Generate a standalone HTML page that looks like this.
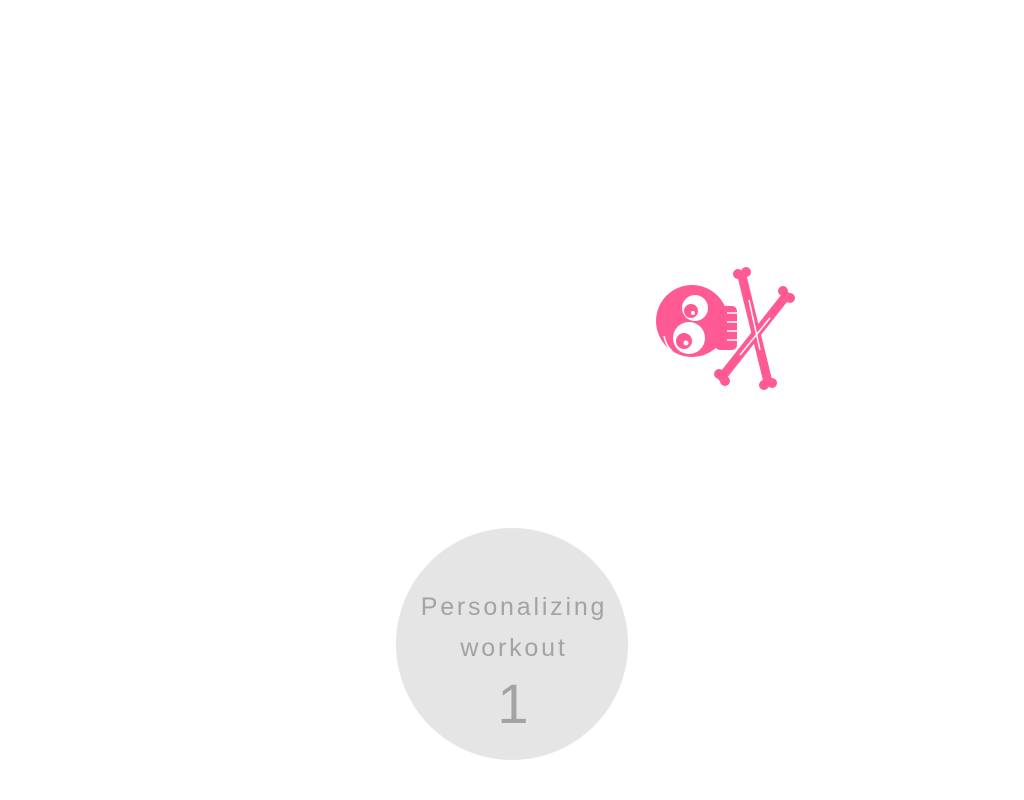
<!DOCTYPE html>
<html><head><style>
html,body{margin:0;padding:0;background:#fff;width:1024px;height:800px;overflow:hidden;position:relative;font-family:"Liberation Sans",sans-serif}
.c{position:absolute;left:396px;top:528px;width:232px;height:232px;border-radius:50%;background:#e5e5e5;color:#a3a3a3;text-align:center}
.t{position:absolute;left:0;width:236px;font-size:25px;letter-spacing:2.8px;font-weight:300}
</style></head><body>
<svg style="position:absolute;left:0;top:0" width="1024" height="800">
<g stroke="#ff5a94" stroke-linecap="round" stroke-width="9" fill="none">
<line x1="742" y1="276" x2="768" y2="382"/>
<line x1="786" y1="296" x2="722" y2="377"/>
</g>
<g fill="#ff5a94">
<circle cx="738" cy="274" r="5"/><circle cx="746" cy="272" r="5"/>
<circle cx="764" cy="385" r="5"/><circle cx="772" cy="383" r="5"/>
<circle cx="783" cy="291" r="5"/><circle cx="790" cy="298" r="5"/>
<circle cx="719" cy="374" r="5"/><circle cx="725" cy="381" r="5"/>
<circle cx="692" cy="321" r="36"/>
<rect x="715" y="306" width="22" height="44" rx="5"/>
</g>
<g stroke="#fff" stroke-width="1.5" fill="none">
<line x1="727" y1="313" x2="737" y2="313"/><line x1="727" y1="322" x2="737" y2="322"/>
<line x1="727" y1="331" x2="737" y2="331"/><line x1="727" y1="340" x2="737" y2="340"/>
<line x1="749" y1="300" x2="760" y2="350"/><line x1="740" y1="355" x2="770" y2="318"/>
<path d="M664 336 q2 10 8 15"/>
</g>
<circle cx="695" cy="308" r="13" fill="#fff"/><circle cx="691" cy="311" r="7" fill="#ff5a94"/><circle cx="693" cy="313" r="2" fill="#fff"/>
<circle cx="689" cy="338" r="16" fill="#fff"/><circle cx="684" cy="341" r="8" fill="#ff5a94"/><circle cx="686" cy="343" r="2.5" fill="#fff"/>
</svg>
<div class="c">
<div class="t" style="top:65px">Personalizing</div>
<div class="t" style="top:106px">workout</div>
<div class="t" style="top:143px;font-size:56px;letter-spacing:0;width:234px">1</div>
</div>
</body></html>
